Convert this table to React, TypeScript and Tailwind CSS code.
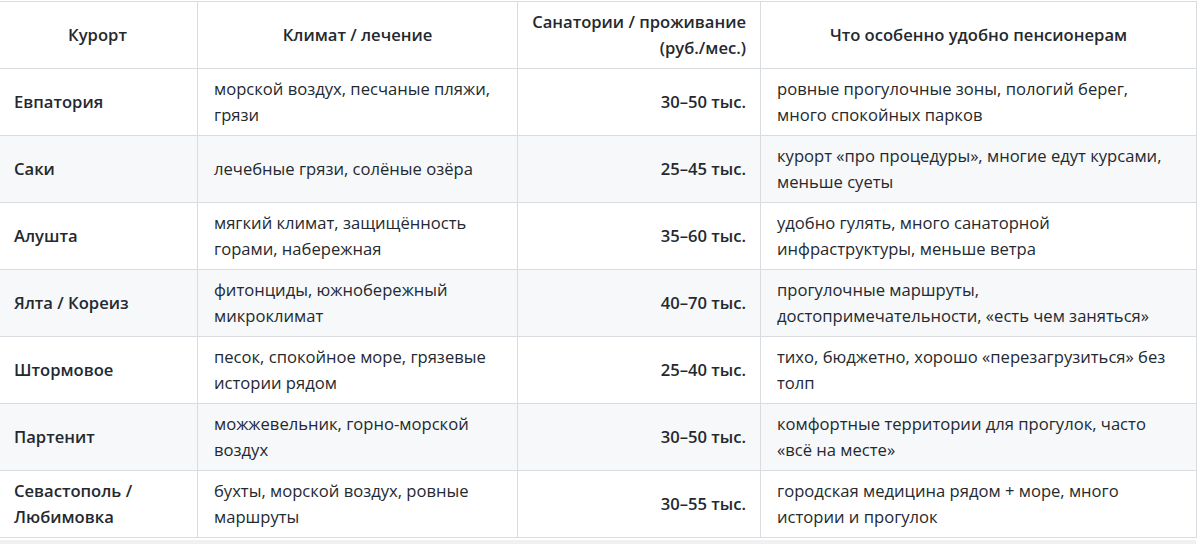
import React from "react";

const rows = [
  ["Евпатория", "морской воздух, песчаные пляжи, грязи", "30–50 тыс.", "ровные прогулочные зоны, пологий берег, много спокойных парков"],
  ["Саки", "лечебные грязи, солёные озёра", "25–45 тыс.", "курорт «про процедуры», многие едут курсами, меньше суеты"],
  ["Алушта", "мягкий климат, защищённость горами, набережная", "35–60 тыс.", "удобно гулять, много санаторной инфраструктуры, меньше ветра"],
  ["Ялта / Кореиз", "фитонциды, южнобережный микроклимат", "40–70 тыс.", "прогулочные маршруты, достопримечательности, «есть чем заняться»"],
  ["Штормовое", "песок, спокойное море, грязевые истории рядом", "25–40 тыс.", "тихо, бюджетно, хорошо «перезагрузиться» без толп"],
  ["Партенит", "можжевельник, горно-морской воздух", "30–50 тыс.", "комфортные территории для прогулок, часто «всё на месте»"],
  ["Севастополь / Любимовка", "бухты, морской воздух, ровные маршруты", "30–55 тыс.", "городская медицина рядом + море, много истории и прогулок"],
];

export default function App() {
  return (
    <div
      className="w-[1200px] h-[544px] overflow-hidden bg-white text-[#24292f]"
      style={{ fontFamily: '"Open Sans", "Noto Sans", sans-serif' }}
    >
      <div className="ml-[-3px] pt-[1px]">
        <table className="table-fixed border-collapse w-[1199px] text-[16.6px] leading-[26px]">
          <colgroup>
            <col className="w-[200px]" />
            <col className="w-[320px]" />
            <col className="w-[243px]" />
            <col className="w-[436px]" />
          </colgroup>
          <thead>
            <tr className="bg-white">
              <th className="border border-[#d9dde2] px-4 py-[7px] font-semibold text-center">Курорт</th>
              <th className="border border-[#d9dde2] px-4 py-[7px] font-semibold text-center">Климат / лечение</th>
              <th className="border border-[#d9dde2] px-[14px] py-[7px] font-semibold text-right">
                Санатории / проживание
                <br />
                (руб./мес.)
              </th>
              <th className="border border-[#d9dde2] px-4 py-[7px] font-semibold text-center">Что особенно удобно пенсионерам</th>
            </tr>
          </thead>
          <tbody>
            {rows.map((r, i) => (
              <tr key={i} className={i % 2 === 1 ? "bg-[#f6f8fa]" : "bg-white"}>
                <td className="border border-[#d9dde2] px-4 py-[7px] font-semibold align-middle">{r[0]}</td>
                <td className="border border-[#d9dde2] px-4 py-[7px] align-middle">{r[1]}</td>
                <td className="border border-[#d9dde2] px-[14px] py-[7px] font-semibold text-right align-middle">{r[2]}</td>
                <td className="border border-[#d9dde2] px-4 py-[7px] align-middle">{r[3]}</td>
              </tr>
            ))}
          </tbody>
        </table>
      </div>
      <div className="mt-[2px] h-[4px] w-[1196px] bg-[#eef0f2]" />
    </div>
  );
}
